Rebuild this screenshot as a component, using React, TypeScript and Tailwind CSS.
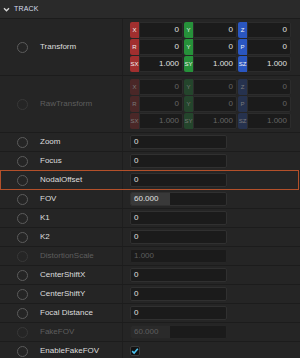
import React from 'react';

type Tag = { label: string; value: string };

const tagColors = {
  on: ['bg-[#a12f2f]', 'bg-[#26913a]', 'bg-[#2a56c0]'],
  off: ['bg-[#4a2727]', 'bg-[#24452c]', 'bg-[#26324e]'],
};

const transformRows: Tag[][] = [
  [
    { label: 'X', value: '0' },
    { label: 'Y', value: '0' },
    { label: 'Z', value: '0' },
  ],
  [
    { label: 'R', value: '0' },
    { label: 'Y', value: '0' },
    { label: 'P', value: '0' },
  ],
  [
    { label: 'SX', value: '1.000' },
    { label: 'SY', value: '1.000' },
    { label: 'SZ', value: '1.000' },
  ],
];

const Circle = ({ disabled = false }: { disabled?: boolean }) => (
  <div
    className={`w-[11px] h-[11px] rounded-full border-[1.5px] shrink-0 ${
      disabled ? 'border-[#383838]' : 'border-[#5c5c5c]'
    }`}
  />
);

const Label = ({ text, disabled = false }: { text: string; disabled?: boolean }) => (
  <div className="w-[122px] shrink-0 flex items-center pl-[17px] gap-[12px]">
    <Circle disabled={disabled} />
    <span className={`text-[8px] ${disabled ? 'text-[#5e5e5e]' : 'text-[#dedede]'}`}>{text}</span>
  </div>
);

const VectorRow = ({ label, disabled = false }: { label: string; disabled?: boolean }) => (
  <div className="flex border-b border-[#1c1c1c] h-[57px]">
    <Label text={label} disabled={disabled} />
    <div className="flex-1 border-l border-[#1e1e1e] pl-[7px] pt-[3px] flex flex-col gap-[1px]">
      {transformRows.map((row, i) => (
        <div key={i} className="flex gap-[1px] h-[16px]">
          {row.map((t, j) => (
            <div key={j} className="flex w-[53px] h-[16px]">
              <div
                className={`w-[9px] flex items-center justify-center rounded-l-[2px] text-[6px] ${
                  disabled ? `${tagColors.off[j]} text-[#7a7a7a]` : `${tagColors.on[j]} text-[#f0f0f0]`
                }`}
              >
                {t.label}
              </div>
              <div
                className={`flex-1 flex items-center justify-end pr-[3px] rounded-r-[2px] border border-[#2c2c2c] bg-[#1b1b1b] text-[8px] ${
                  disabled ? 'text-[#666]' : 'text-[#e0e0e0]'
                }`}
              >
                {t.value}
              </div>
            </div>
          ))}
        </div>
      ))}
    </div>
  </div>
);

type Field = {
  label: string;
  value: string;
  disabled?: boolean;
  kind?: 'text' | 'slider' | 'check';
  focus?: boolean;
};

const fields: Field[] = [
  { label: 'Zoom', value: '0' },
  { label: 'Focus', value: '0' },
  { label: 'NodalOffset', value: '0', focus: true },
  { label: 'FOV', value: '60.000', kind: 'slider' },
  { label: 'K1', value: '0' },
  { label: 'K2', value: '0' },
  { label: 'DistortionScale', value: '1.000', disabled: true },
  { label: 'CenterShiftX', value: '0' },
  { label: 'CenterShiftY', value: '0' },
  { label: 'Focal Distance', value: '0' },
  { label: 'FakeFOV', value: '60.000', kind: 'slider', disabled: true },
  { label: 'EnableFakeFOV', value: '', kind: 'check' },
];

const FieldRow = ({ f }: { f: Field }) => {
  const kind = f.kind ?? 'text';
  return (
    <div className="relative flex h-[19px] border-b border-[#1c1c1c]">
      {f.focus && (
        <div className="absolute left-0 right-[1px] -top-[1px] -bottom-[1px] border border-[#b4502a] pointer-events-none" />
      )}
      <Label text={f.label} disabled={f.disabled} />
      <div className="flex-1 border-l border-[#1e1e1e] pl-[7px] flex items-center">
        {kind === 'check' ? (
          <div className="w-[10px] h-[10px] rounded-[2px] bg-[#121212] border border-[#3c3c3c] flex items-center justify-center">
            <svg width="8" height="8" viewBox="0 0 8 8">
              <path d="M1.2 4.2 L3.1 6 L6.8 1.8" stroke="#4cc4f2" strokeWidth="1.6" fill="none" />
            </svg>
          </div>
        ) : (
          <div
            className={`relative w-[97px] h-[14px] rounded-[2px] border bg-[#1b1b1b] overflow-hidden flex items-center ${
              f.disabled ? 'border-[#262626]' : 'border-[#303030]'
            }`}
          >
            {kind === 'slider' && (
              <div className={`absolute left-0 top-0 bottom-0 w-[39px] ${f.disabled ? 'bg-[#2a2a2a]' : 'bg-[#393939]'}`} />
            )}
            <span
              className={`relative pl-[3px] text-[8px] ${f.disabled ? 'text-[#5e5e5e]' : 'text-[#e0e0e0]'}`}
            >
              {f.value}
            </span>
          </div>
        )}
      </div>
    </div>
  );
};

export default function App() {
  return (
    <div
      className="w-[300px] h-[358px] overflow-hidden bg-[#252525]"
      style={{ fontFamily: '"Liberation Sans", Arial, sans-serif' }}
    >
      <div className="h-[19px] flex items-center gap-[4px] pl-[3px] bg-[#2a2a2a] border-b border-[#1c1c1c]">
        <svg width="7" height="7" viewBox="0 0 7 7">
          <path d="M1 2.2 L3.5 4.8 L6 2.2" stroke="#d8d8d8" strokeWidth="1.3" fill="none" />
        </svg>
        <span className="text-[7px] text-[#d6dcea] tracking-[0.2px]">TRACK</span>
      </div>
      <VectorRow label="Transform" />
      <VectorRow label="RawTransform" disabled />
      {fields.map((f) => (
        <FieldRow key={f.label} f={f} />
      ))}
    </div>
  );
}
